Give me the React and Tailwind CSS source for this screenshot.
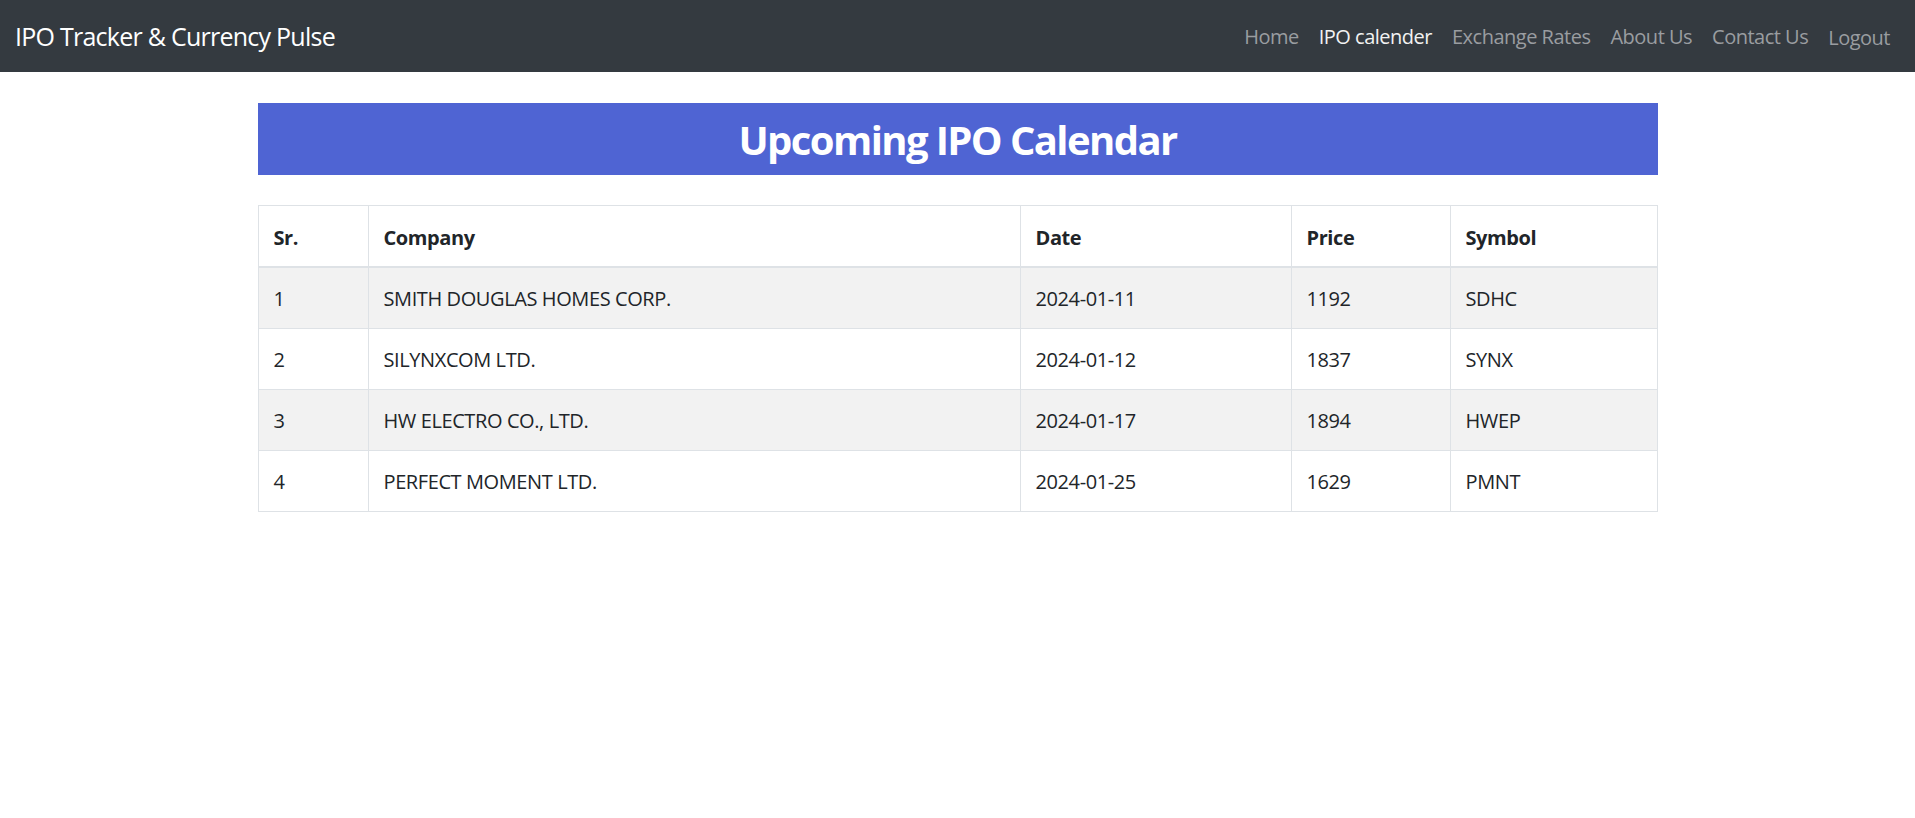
import React from "react";

const navLinks = [
  { label: "Home" },
  { label: "IPO calender", active: true },
  { label: "Exchange Rates" },
  { label: "About Us" },
  { label: "Contact Us" },
  { label: "Logout", logout: true },
];

const ipos = [
  { sr: 1, company: "SMITH DOUGLAS HOMES CORP.", date: "2024-01-11", price: 1192, symbol: "SDHC" },
  { sr: 2, company: "SILYNXCOM LTD.", date: "2024-01-12", price: 1837, symbol: "SYNX" },
  { sr: 3, company: "HW ELECTRO CO., LTD.", date: "2024-01-17", price: 1894, symbol: "HWEP" },
  { sr: 4, company: "PERFECT MOMENT LTD.", date: "2024-01-25", price: 1629, symbol: "PMNT" },
];

const font = { fontFamily: '"Segoe UI", "Open Sans", "Noto Sans", sans-serif' };

function Navbar() {
  return (
    <nav className="flex h-[72px] items-center justify-between bg-[#343a40] px-[15px]">
      <a href="#" className="text-[25px] leading-[37px] tracking-[-0.03em] text-white">
        IPO Tracker &amp; Currency Pulse
      </a>
      <ul className="flex items-center pt-[2px]">
        {navLinks.map((link) => (
          <li key={link.label}>
            <a
              href="#"
              className={
                "block px-[10px] text-[20px] leading-[30px] tracking-[-0.025em] " +
                (link.active ? "text-[#f2f2f2]" : "text-[#9a9da0]") +
                (link.logout ? " pt-[2px]" : "")
              }
            >
              {link.label}
            </a>
          </li>
        ))}
      </ul>
    </nav>
  );
}

function IpoTable() {
  const th =
    "border border-[#dee2e6] border-b-2 px-[15px] pt-[17px] pb-[13px] text-left align-bottom font-bold";
  const td = "border border-[#dee2e6] px-[15px] pt-[16px] pb-[14px]";

  return (
    <table className="w-full border-collapse border border-[#dee2e6] text-[20px] leading-[30px] tracking-[-0.02em] text-[#212529]">
      <thead>
        <tr>
          <th className={th + " w-[110px]"}>Sr.</th>
          <th className={th + " w-[652px]"}>Company</th>
          <th className={th + " w-[271px]"}>Date</th>
          <th className={th + " w-[159px]"}>Price</th>
          <th className={th}>Symbol</th>
        </tr>
      </thead>
      <tbody>
        {ipos.map((ipo, i) => (
          <tr key={ipo.sr} className={i % 2 === 0 ? "bg-[#f2f2f2]" : "bg-white"}>
            <td className={td}>{ipo.sr}</td>
            <td className={td}>{ipo.company}</td>
            <td className={td}>{ipo.date}</td>
            <td className={td}>{ipo.price}</td>
            <td className={td}>{ipo.symbol}</td>
          </tr>
        ))}
      </tbody>
    </table>
  );
}

export default function App() {
  return (
    <div className="min-h-screen bg-white" style={font}>
      <Navbar />
      <main className="mx-auto w-[1400px] pt-[31px]">
        <div className="mb-[30px] bg-[#4f64d3] pt-[13px] pb-[11px] text-center">
          <h2 className="text-[40px] font-bold leading-[48px] tracking-[-0.04em] text-white">
            Upcoming IPO Calendar
          </h2>
        </div>
        <IpoTable />
      </main>
    </div>
  );
}
